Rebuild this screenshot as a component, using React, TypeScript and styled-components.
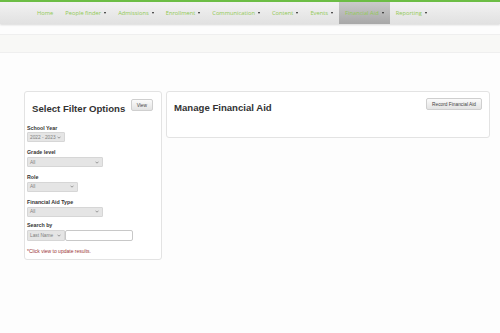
import React from "react";
import styled, { createGlobalStyle } from "styled-components";

const GlobalStyle = createGlobalStyle`
  html, body {
    margin: 0;
    padding: 0;
    background: #fdfdfd;
    font-family: "Liberation Sans", Arial, sans-serif;
  }
`;

const navItems = [
  { label: "Home", caret: false },
  { label: "People finder", caret: true },
  { label: "Admissions", caret: true },
  { label: "Enrollment", caret: true },
  { label: "Communication", caret: true },
  { label: "Content", caret: true },
  { label: "Events", caret: true },
  { label: "Financial Aid", caret: true, active: true },
  { label: "Reporting", caret: true },
];

const filters = [
  { label: "School Year", value: "2022 - 2023", width: 38 },
  { label: "Grade level", value: "All", width: 76 },
  { label: "Role", value: "All", width: 51 },
  { label: "Financial Aid Type", value: "All", width: 76 },
];

const Chevron = () => (
  <svg width="4" height="3" viewBox="0 0 4 3">
    <polyline points="0.5,0.7 2,2.2 3.5,0.7" fill="none" stroke="#777" strokeWidth="0.7" />
  </svg>
);

const Dropdown = ({ value, width }: { value: string; width: number }) => (
  <SelectBox $width={width}>
    <span>{value}</span>
    <Chevron />
  </SelectBox>
);

const App = () => {
  return (
    <>
      <GlobalStyle />
      <Page>
        <NavBar>
          {navItems.map((item) => (
            <NavItem key={item.label} $active={!!item.active}>
              {item.label}
              {item.caret && <Caret />}
            </NavItem>
          ))}
        </NavBar>
        <SubBar />
        <Content>
          <FilterPanel>
            <FilterHeader>
              <PanelTitle>Select Filter Options</PanelTitle>
              <SmallButton>View</SmallButton>
            </FilterHeader>

            {filters.map((f) => (
              <Field key={f.label}>
                <Label>{f.label}</Label>
                <Dropdown value={f.value} width={f.width} />
              </Field>
            ))}

            <Field>
              <Label>Search by</Label>
              <SearchRow>
                <Dropdown value="Last Name" width={38} />
                <TextInput type="text" />
              </SearchRow>
            </Field>

            <Hint>*Click view to update results.</Hint>
          </FilterPanel>

          <MainPanel>
            <PanelTitle>Manage Financial Aid</PanelTitle>
            <SmallButton>Record Financial Aid</SmallButton>
          </MainPanel>
        </Content>
      </Page>
    </>
  );
};

export default App;

const Page = styled.div`
  width: 500px;
  min-height: 333px;
`;

const NavBar = styled.div`
  display: flex;
  align-items: stretch;
  height: 22px;
  padding-left: 31px;
  border-top: 2px solid #6cbd45;
  background: linear-gradient(#f2f2f2, #e1e1e1);
  box-shadow: 0 1px 2px rgba(0, 0, 0, 0.15);
`;

const NavItem = styled.div<{ $active: boolean }>`
  display: flex;
  align-items: center;
  gap: 3px;
  padding: 0 6px;
  font-family: "Open Sans", sans-serif;
  font-size: 5.75px;
  color: #92c955;
  background: ${(p) =>
    p.$active ? "linear-gradient(#cbcbcb, #a8a8a8)" : "transparent"};
`;

const Caret = styled.span`
  width: 0;
  height: 0;
  border-left: 1.5px solid transparent;
  border-right: 1.5px solid transparent;
  border-top: 2px solid #222;
`;

const SubBar = styled.div`
  margin-top: 10px;
  height: 17px;
  background: #f8f8f6;
  border-top: 1px solid #efefef;
  border-bottom: 1px solid #efefef;
`;

const Content = styled.div`
  display: flex;
  align-items: flex-start;
  gap: 4px;
  padding: 38px 10px 0 24px;
`;

const Panel = styled.div`
  background: #fff;
  border: 1px solid #e3e3e3;
  border-radius: 3px;
`;

const FilterPanel = styled(Panel)`
  width: 138px;
  height: 169px;
  box-sizing: border-box;
  padding: 7px 2px 0 2px;
`;

const FilterHeader = styled.div`
  display: flex;
  justify-content: space-between;
  align-items: flex-start;
  height: 25.5px;
  padding: 0 6px 0 5px;
`;

const PanelTitle = styled.h2`
  margin: 4px 0 0 0;
  font-size: 9.6px;
  line-height: 12px;
  font-weight: bold;
  color: #333;
`;

const SmallButton = styled.button`
  font-family: "Liberation Sans", Arial, sans-serif;
  font-size: 4.8px;
  color: #444;
  padding: 0 5px;
  border: 1px solid #cfcfcf;
  border-radius: 2px;
  background: linear-gradient(#fbfbfb, #e3e3e3);
  height: 12px;
`;

const Field = styled.div`
  margin-bottom: 7px;

  &:nth-of-type(5) {
    margin-bottom: 5.5px;
  }
`;

const Label = styled.div`
  font-size: 5.3px;
  line-height: 7px;
  font-weight: bold;
  color: #333;
  margin-bottom: 0.8px;
`;

const SelectBox = styled.div<{ $width: number }>`
  width: ${(p) => p.$width}px;
  height: 10px;
  box-sizing: border-box;
  display: flex;
  align-items: center;
  justify-content: space-between;
  padding: 0 3px 0 2px;
  font-size: 4.8px;
  color: #808080;
  background: #e5e5e5;
  border: 1px solid #d6d6d6;
  border-radius: 1px;
`;

const SearchRow = styled.div`
  display: flex;
  align-items: stretch;
  height: 11px;

  & > div {
    height: 11px;
  }
`;

const TextInput = styled.input`
  width: 68px;
  height: 11px;
  box-sizing: border-box;
  border: 1px solid #c8c8c8;
  border-radius: 2px;
  padding: 0 2px;
  font-size: 5px;
  margin: 0;
`;

const Hint = styled.div`
  font-size: 5px;
  line-height: 7px;
  color: #9b3535;
`;

const MainPanel = styled(Panel)`
  flex: 1;
  height: 47px;
  box-sizing: border-box;
  display: flex;
  justify-content: space-between;
  align-items: flex-start;
  padding: 6px 7px 0 7px;
`;
